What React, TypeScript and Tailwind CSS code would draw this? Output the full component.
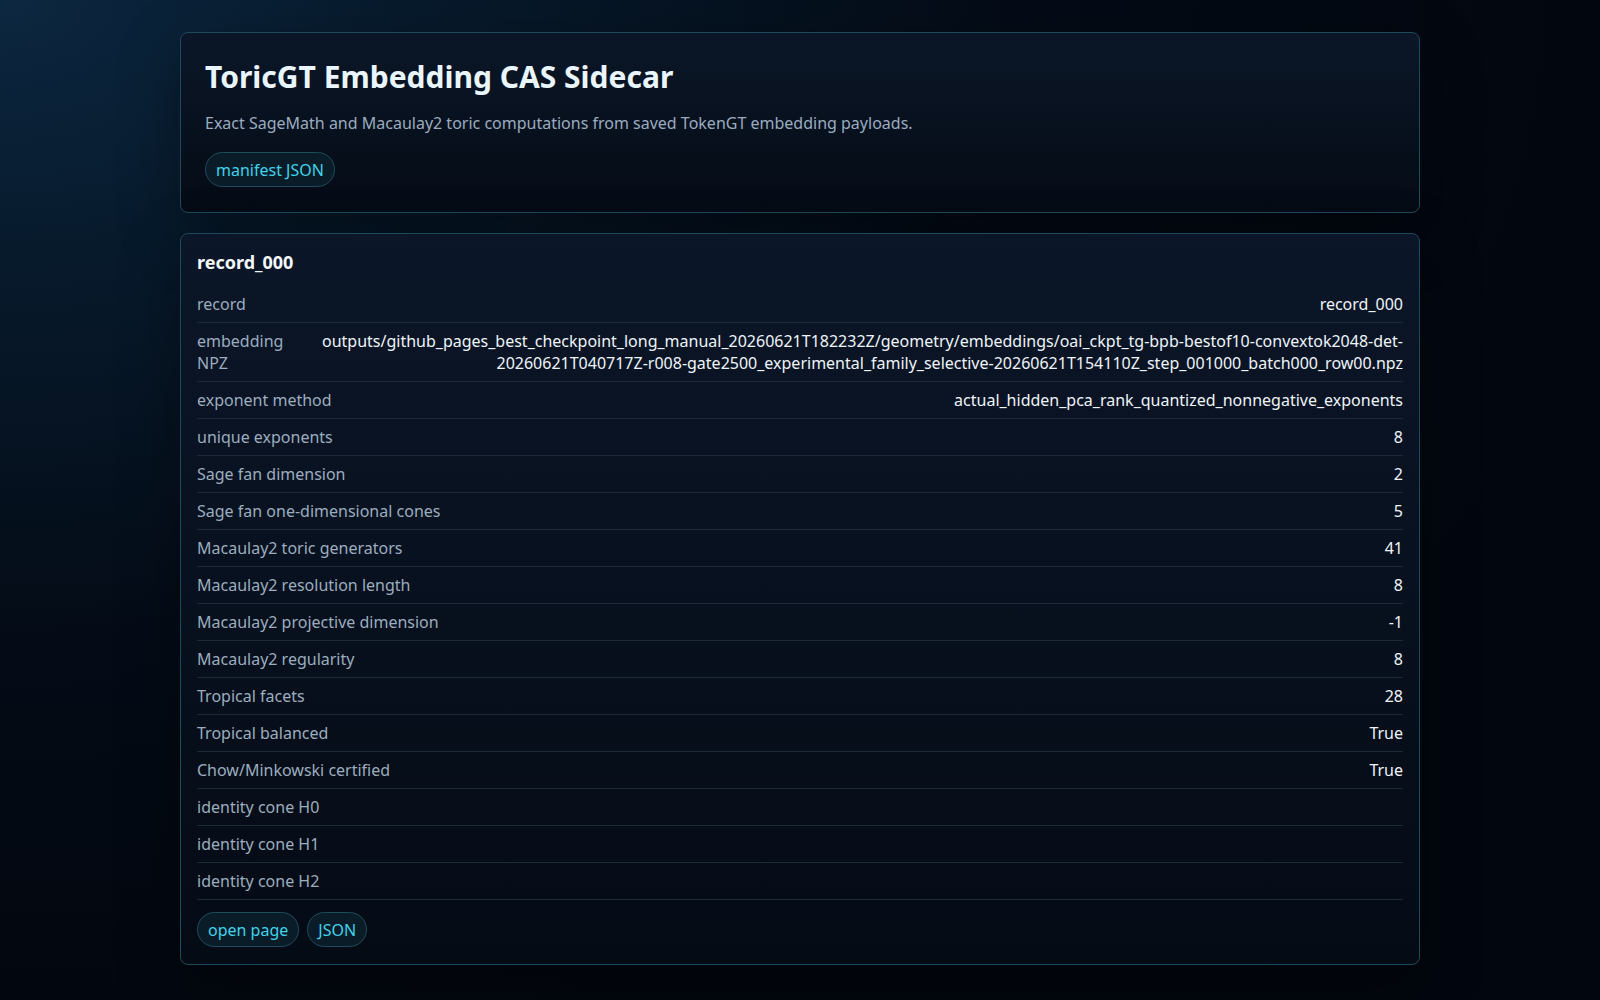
import React from "react";

type Row = { label: string; value?: React.ReactNode; narrow?: boolean };

const rows: Row[] = [
  { label: "record", value: "record_000" },
  {
    label: "embedding NPZ",
    narrow: true,
    value: (
      <>
        outputs/github_pages_best_checkpoint_long_manual_20260621T182232Z/geometry/embeddings/oai_ckpt_tg-bpb-bestof10-convextok2048-det-
        <wbr />
        20260621T040717Z-r008-gate2500_experimental_family_selective-20260621T154110Z_step_001000_batch000_row00.npz
      </>
    ),
  },
  { label: "exponent method", value: "actual_hidden_pca_rank_quantized_nonnegative_exponents" },
  { label: "unique exponents", value: "8" },
  { label: "Sage fan dimension", value: "2" },
  { label: "Sage fan one-dimensional cones", value: "5" },
  { label: "Macaulay2 toric generators", value: "41" },
  { label: "Macaulay2 resolution length", value: "8" },
  { label: "Macaulay2 projective dimension", value: "-1" },
  { label: "Macaulay2 regularity", value: "8" },
  { label: "Tropical facets", value: "28" },
  { label: "Tropical balanced", value: "True" },
  { label: "Chow/Minkowski certified", value: "True" },
  { label: "identity cone H0" },
  { label: "identity cone H1" },
  { label: "identity cone H2" },
];

function Pill({ children }: { children: React.ReactNode }) {
  return (
    <a className="inline-flex h-[35px] items-center rounded-full border border-[#1d4b5c] bg-[#0a1c28] px-[10px] text-[16px] leading-[22px] text-[#3fd3ec]">
      {children}
    </a>
  );
}

export default function App() {
  return (
    <div className="min-h-screen bg-[#03070f] bg-[radial-gradient(ellipse_at_0%_0%,#0c2740_0%,#071a2c_18%,#040b16_45%,#02060e_75%)] font-['Noto_Sans',sans-serif]">
      <main className="mx-auto flex w-[1240px] flex-col gap-[20px] pt-8 pb-9">
        <section className="rounded-lg border border-[#1b4a5c] bg-gradient-to-b from-[#0b1728] to-[#050b15] px-6 pt-6 pb-[25px] shadow-[0_20px_60px_rgba(0,0,0,0.35)]">
          <h1 className="text-[30px] leading-[40px] font-bold text-[#eaf6ff]">ToricGT Embedding CAS Sidecar</h1>
          <p className="mt-[14px] text-[16px] leading-[24px] text-[#9aacc0]">
            Exact SageMath and Macaulay2 toric computations from saved TokenGT embedding payloads.
          </p>
          <div className="mt-[17px] flex">
            <Pill>manifest JSON</Pill>
          </div>
        </section>

        <section className="rounded-lg border border-[#1b4a5c] bg-gradient-to-b from-[#0b1628] to-[#050b15] px-4 pt-4 pb-[17px] shadow-[0_20px_60px_rgba(0,0,0,0.35)]">
          <h2 className="text-[18px] leading-[25px] font-bold text-[#f3f8fc]">record_000</h2>
          <div className="mt-[11px] flex flex-col">
            {rows.map((r) => (
              <div
                key={r.label}
                className="flex items-start justify-between gap-4 border-b border-[#1c2938] py-[7px] text-[16px] leading-[22px]"
              >
                <span className={`${r.narrow ? "w-[96px]" : ""} shrink-0 text-[#9badbf]`}>{r.label}</span>
                <span className="min-w-0 text-right text-[#eef4fa]">{r.value}</span>
              </div>
            ))}
          </div>
          <div className="mt-[12px] flex gap-2">
            <Pill>open page</Pill>
            <Pill>JSON</Pill>
          </div>
        </section>
      </main>
    </div>
  );
}
